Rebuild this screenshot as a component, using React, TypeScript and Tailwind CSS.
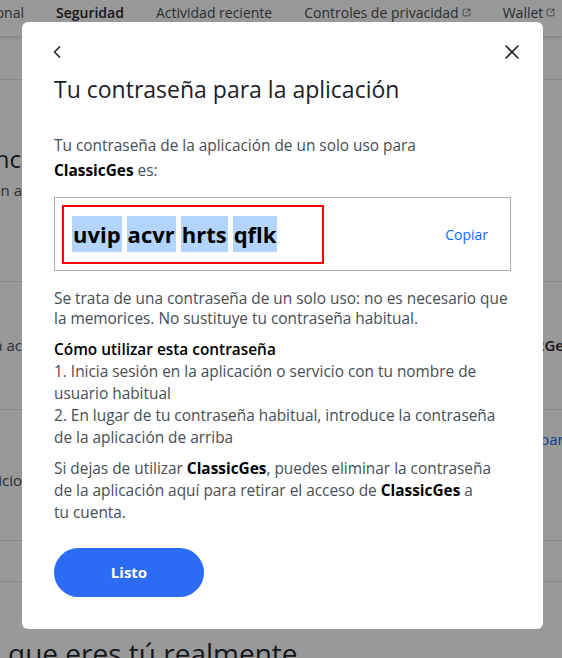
import { ChevronLeft, X, SquareArrowOutUpRight } from "lucide-react"

const font = { fontFamily: '"Open Sans", "Noto Sans", sans-serif' }

function Background() {
  return (
    <div className="h-[658px] overflow-hidden bg-white text-[#232a31]">
      <nav className="flex h-[37px] items-start gap-8 border-b border-[#e0e4e9] shadow-sm pt-[2px] text-[14px] text-[#464e56] whitespace-nowrap">
        <span className="flex w-[24px] shrink-0 justify-end">Información personal</span>
        <span className="font-semibold text-[#232a31]">Seguridad</span>
        <span>Actividad reciente</span>
        <span className="flex items-center gap-[3px]">Controles de privacidad <SquareArrowOutUpRight className="h-[9px] w-[9px]" /></span>
        <span className="flex items-center gap-[3px]">Wallet <SquareArrowOutUpRight className="h-[9px] w-[9px]" /></span>
      </nav>
      <div className="h-[43px] border-b border-[#e0e4e9]" />
      <div className="h-[202px] border-b border-[#e0e4e9] pt-[63px] whitespace-nowrap">
        <p className="flex w-[21px] justify-end text-[24px] leading-8">Cómo inicias sesión ahora mismo tú mismo, muchacho y muchacha hc</p>
        <p className="flex w-[22px] justify-end mt-[4px] text-[15px] text-[#464e56]">Elige tu método de verificación ón a</p>
      </div>
      <div className="flex h-[128px] items-center justify-between border-b border-[#e0e4e9] text-[15px] text-[#464e56] whitespace-nowrap">
        <span className="flex w-[22px] justify-end">Contraseña de la aplicación para ac</span>
        <span className="w-[25px] font-semibold text-[#232a31]">cGes</span>
      </div>
      <div className="flex h-[131px] justify-between border-b border-[#e0e4e9] text-[15px] text-[#464e56] whitespace-nowrap">
        <span className="flex w-[22px] justify-end mt-[59px]">Inicio de sesión en el servicio</span>
        <span className="w-[22px] mt-[18px] text-[#0f69ff]">para</span>
      </div>
      <div className="h-[41px] border-b border-[#e0e4e9]" />
      <p className="mt-[50px] ml-[8px] text-[28px] whitespace-nowrap">que eres tú realmente</p>
    </div>
  )
}

export default function App() {
  return (
    <div className="relative h-[658px] w-[562px] overflow-hidden" style={font}>
      <Background />
      <div className="absolute inset-0 bg-black/40">
        <div className="absolute left-[22px] top-[22px] w-[521px] h-[607px] rounded-md bg-white px-8 pt-[18px]">
          <div className="flex items-center justify-between h-[24px] -ml-[7px] -mr-[13px]">
            <ChevronLeft className="h-[20px] w-[20px] text-[#1d2228]" strokeWidth={2} />
            <X className="h-[24px] w-[24px] text-[#1d2228]" strokeWidth={1.6} />
          </div>
          <h1 className="mt-[9px] text-[23px] leading-8 text-[#1d2228]">Tu contraseña para la aplicación</h1>
          <p className="mt-[28px] text-[15.4px] leading-[25px] text-[#464e56]">
            Tu contraseña de la aplicación de un solo uso para
            <br />
            <b className="text-black">ClassicGes</b> es:
          </p>
          <div className="mt-[14px] flex h-[74px] items-center justify-between border border-[#a9afb6] pl-[7px] pr-[22px]">
            <div className="flex h-[59px] w-[262px] items-center gap-[5px] border-2 border-[#f00] pl-[8px]">
              {["uvip", "acvr", "hrts", "qflk"].map((w) => (
                <span key={w} className="bg-[#b3d4fc] px-[1px] text-[22px] font-bold leading-[36px] text-black">{w}</span>
              ))}
            </div>
            <span className="text-[14px] text-[#0f69ff]">Copiar</span>
          </div>
          <p className="mt-[18px] text-[15.4px] leading-[20px] text-[#464e56]">
            Se trata de una contraseña de un solo uso: no es necesario que la memorices. No sustituye tu contraseña habitual.
          </p>
          <h2 className="mt-[10px] text-[15.4px] font-semibold leading-[22px] text-black">Cómo utilizar esta contraseña</h2>
          <p className="text-[15.4px] leading-[22px] text-[#464e56]">
            1. Inicia sesión en la aplicación o servicio con tu nombre de usuario habitual
          </p>
          <p className="text-[15.4px] leading-[22px] text-[#464e56]">
            2. En lugar de tu contraseña habitual, introduce la contraseña de la aplicación de arriba
          </p>
          <p className="mt-[9px] text-[15.4px] leading-[22px] text-[#464e56]">
            Si dejas de utilizar <b className="text-black">ClassicGes</b>, puedes eliminar la contraseña de la aplicación aquí para retirar el acceso de <b className="text-black">ClassicGes</b> a
            <br />
            tu cuenta.
          </p>
          <button className="mt-[24px] h-[49px] w-[150px] rounded-full bg-[#2c6bf5] text-[15px] font-bold text-white">Listo</button>
        </div>
      </div>
    </div>
  )
}
